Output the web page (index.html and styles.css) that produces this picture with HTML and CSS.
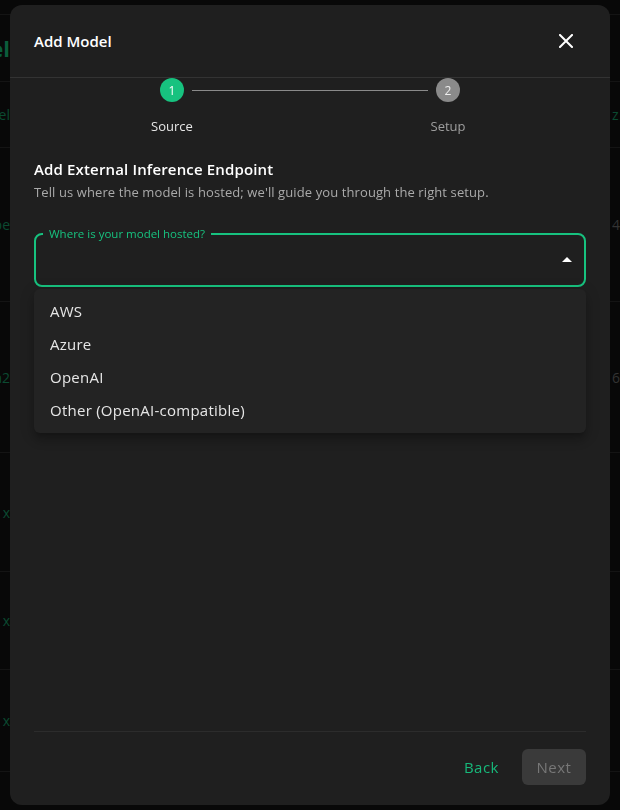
FILE: index.html
```html
<!DOCTYPE html>
<html lang="en">

<head>
    <meta charset="UTF-8">
    <meta name="viewport" content="width=device-width, initial-scale=1.0">
    <title>Add Model</title>

    <link rel="stylesheet" href="styles.css">
</head>

<body>
    <!-- page behind the modal -->
    <div class="page">
        <div class="row" style="height: 15px;"></div>
        <div class="row" style="height: 67px;">
            <span class="cell-l big">Model</span>
        </div>
        <div class="row" style="height: 66px;">
            <span class="cell-l green">Model</span>
            <span class="cell-r green">z</span>
        </div>
        <div class="row" style="height: 154px;">
            <span class="cell-l green">Type</span>
            <span class="cell-r gray">43</span>
        </div>
        <div class="row" style="height: 151px;">
            <span class="cell-l green">gemma2</span>
            <span class="cell-r gray">62</span>
        </div>
        <div class="row" style="height: 119px;">
            <span class="cell-l green">x</span>
        </div>
        <div class="row" style="height: 98px;">
            <span class="cell-l green">x</span>
        </div>
        <div class="row" style="height: 102px;">
            <span class="cell-l green">x</span>
        </div>
    </div>

    <div class="modal">
        <div class="modal-head">
            <h2>Add Model</h2>
            <button class="close" aria-label="Close">
                <svg width="14" height="14" viewBox="0 0 14 14">
                    <path d="M1 1L13 13M13 1L1 13" stroke="#fff" stroke-width="2" stroke-linecap="square" />
                </svg>
            </button>
        </div>

        <div class="steps">
            <div class="step active">
                <span class="dot">1</span>
                <span class="label">Source</span>
            </div>
            <div class="step">
                <span class="dot">2</span>
                <span class="label">Setup</span>
            </div>
        </div>

        <div class="body">
            <h3>Add External Inference Endpoint</h3>
            <p class="sub">Tell us where the model is hosted; we'll guide you through the right setup.</p>

            <div class="select">
                <fieldset class="field">
                    <legend>Where is your model hosted?</legend>
                    <span class="arrow"></span>
                </fieldset>
                <ul class="menu">
                    <li>AWS</li>
                    <li>Azure</li>
                    <li>OpenAI</li>
                    <li>Other (OpenAI-compatible)</li>
                </ul>
            </div>
        </div>

        <div class="foot">
            <button class="back">Back</button>
            <button class="next" disabled>Next</button>
        </div>
    </div>
</body>

</html>
```

FILE: styles.css
```css
* {
    margin: 0;
    padding: 0;
    box-sizing: border-box;
}

body {
    background: #080808;
    font-family: "Open Sans", "Liberation Sans", sans-serif;
    color: #fff;
    width: 620px;
    height: 810px;
    overflow: hidden;
}

/* 后面的页面 */
.page .row {
    display: flex;
    align-items: center;
    justify-content: space-between;
    border-bottom: 1px solid #141414;
}

.page .cell-l {
    width: 10px;
    display: flex;
    justify-content: flex-end;
    white-space: nowrap;
    overflow: hidden;
    font-size: 14px;
}

.page .cell-r {
    width: 8px;
    white-space: nowrap;
    overflow: hidden;
    font-size: 14px;
}

.page .big {
    font-size: 22px;
    font-weight: 700;
    color: #0b5c3b;
}

.page .green {
    color: #0b4a31;
}

.page .gray {
    color: #333;
}

/* 弹窗 */
.modal {
    position: fixed;
    left: 10px;
    top: 5px;
    width: 600px;
    height: 800px;
    background: #1f1f1f;
    border-radius: 12px;
    display: flex;
    flex-direction: column;
}

.modal-head {
    height: 73px;
    padding: 0 24px 1px;
    display: flex;
    align-items: center;
    justify-content: space-between;
    border-bottom: 1px solid #333;
}

.modal-head h2 {
    font-size: 15px;
    font-weight: 600;
}

.close {
    width: 40px;
    height: 40px;
    background: none;
    border: none;
    display: flex;
    align-items: center;
    justify-content: center;
    cursor: pointer;
}

.steps {
    display: flex;
    padding: 0 24px;
}

.step {
    flex: 1;
    display: flex;
    flex-direction: column;
    align-items: center;
    position: relative;
}

.step .dot {
    width: 24px;
    height: 24px;
    border-radius: 50%;
    background: #8a8a8a;
    color: #eee;
    font-size: 12px;
    display: flex;
    align-items: center;
    justify-content: center;
}

.step.active .dot {
    background: #17c27f;
    color: #fff;
}

/* 连接线 */
.step.active::after {
    content: "";
    position: absolute;
    top: 12px;
    left: calc(50% + 20px);
    width: calc(100% - 40px);
    height: 1px;
    background: #8a8a8a;
}

.step .label {
    margin-top: 15px;
    font-size: 13px;
    line-height: 18px;
    color: #9e9e9e;
}

.step.active .label {
    color: #e6e6e6;
}

.body {
    flex: 1;
    padding: 24px 24px 0;
}

.body h3 {
    font-size: 15px;
    font-weight: 600;
    line-height: 20px;
    letter-spacing: .15px;
}

.body .sub {
    margin-top: 4px;
    font-size: 13px;
    line-height: 18px;
    letter-spacing: .1px;
    color: #aaa;
}

.select {
    margin-top: 26px;
    position: relative;
}

.field {
    height: 60px;
    border: 2px solid #17c27f;
    border-radius: 8px;
    position: relative;
}

.field legend {
    margin-left: 7px;
    padding: 0 6px;
    font-size: 11.5px;
    line-height: 14px;
    color: #17c27f;
}

.field .arrow {
    position: absolute;
    right: 12px;
    top: 16px;
    border-left: 5px solid transparent;
    border-right: 5px solid transparent;
    border-bottom: 5px solid #fff;
}

.menu {
    position: absolute;
    left: 0;
    right: 0;
    top: 62px;
    list-style: none;
    padding: 6px 0;
    background: #232323;
    border-radius: 6px;
    box-shadow: 0 5px 5px -3px rgba(0, 0, 0, .2), 0 8px 10px 1px rgba(0, 0, 0, .14), 0 3px 14px 2px rgba(0, 0, 0, .12);
}

.menu li {
    height: 33px;
    line-height: 33px;
    padding: 0 16px;
    font-size: 15px;
    letter-spacing: .25px;
    color: #e6e6e6;
}

.foot {
    margin: 0 24px;
    padding: 17px 0 20px;
    border-top: 1px solid #2c2c2c;
    display: flex;
    justify-content: flex-end;
    gap: 8px;
}

.foot button {
    height: 36px;
    border: none;
    border-radius: 6px;
    font-family: inherit;
    font-size: 15px;
    font-weight: 500;
    letter-spacing: .5px;
    cursor: pointer;
}

.foot .back {
    padding: 0 15px;
    background: none;
    color: #17b87a;
}

.foot .next {
    width: 64px;
    background: #3a3a3a;
    color: #777;
}
```
